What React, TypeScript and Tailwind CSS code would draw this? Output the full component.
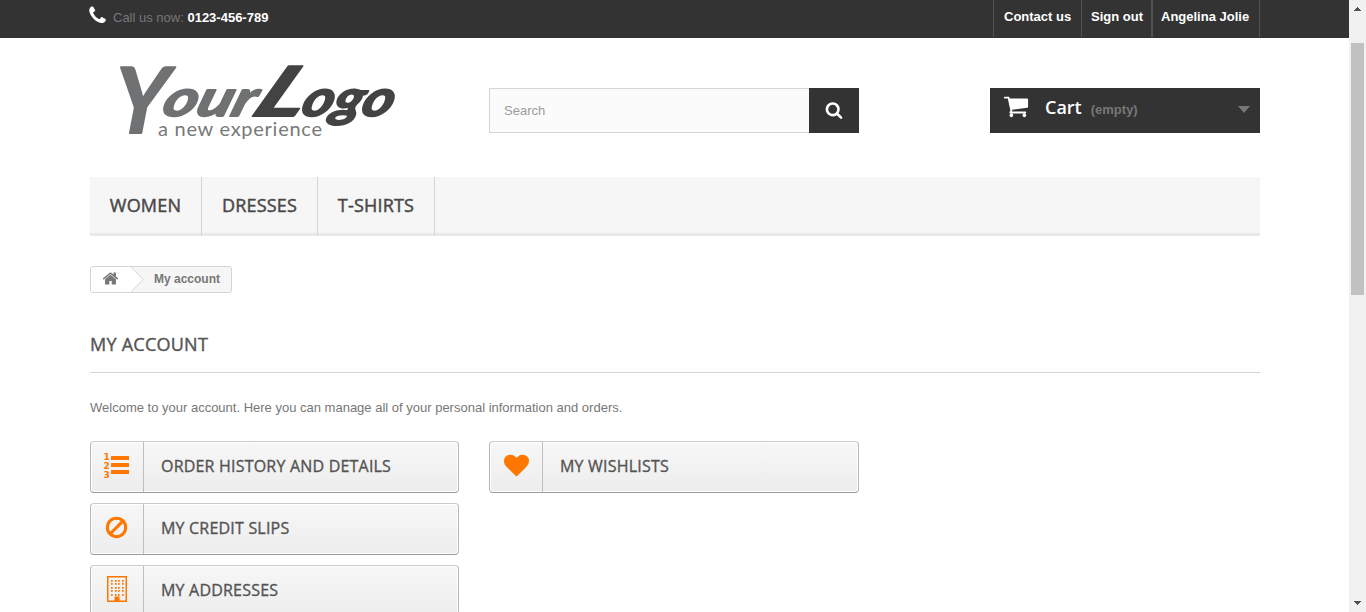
import type { ReactNode } from "react";

const PHONE =
  "M1600 1240q0 27-10 70.5t-21 68.5q-21 50-122 106-94 51-186 51-27 0-53-3.5t-57.5-12.5-47-14.5-55.5-20.5-49-18q-98-35-175-83-127-79-264-216t-216-264q-48-77-83-175-3-9-18-49t-20.5-55.5-14.5-47-12.5-57.5-3.5-53q0-92 51-186 56-101 106-122 25-11 68.5-21t70.5-10q14 0 21 3 18 6 53 76 11 19 30 54t35 63.5 31 53.5q3 4 17.5 25t21.5 35.5 7 28.5q0 20-28.5 50t-62 55-62 53-28.5 46q0 9 5 22.5t8.5 20.5 14 24 11.5 19q76 137 174 235t235 174q2 1 19 11.5t24 14 20.5 8.5 22.5 5q18 0 46-28.5t53-62 55-62 50-28.5q14 0 28.5 7t35.5 21.5 25 17.5q25 15 53.5 31t63.5 35 54 30q70 35 76 53 3 7 3 21z";
const SEARCH =
  "M1216 832q0-185-131.5-316.5t-316.5-131.5-316.5 131.5-131.5 316.5 131.5 316.5 316.5 131.5 316.5-131.5 131.5-316.5zm512 832q0 52-38 90t-90 38q-54 0-90-38l-343-342q-179 124-399 124-143 0-273.5-55.5t-225-150-150-225-55.5-273.5 55.5-273.5 150-225 225-150 273.5-55.5 273.5 55.5 225 150 150 225 55.5 273.5q0 220-124 399l343 343q37 37 37 90z";
const CART =
  "M704 1536q0 52-38 90t-90 38-90-38-38-90 38-90 90-38 90 38 38 90zm896 0q0 52-38 90t-90 38-90-38-38-90 38-90 90-38 90 38 38 90zm128-1088v512q0 24-16.5 42.5t-40.5 21.5l-1044 122q13 60 13 70 0 16-24 64h920q26 0 45 19t19 45-19 45-45 19h-1024q-26 0-45-19t-19-45q0-11 8-31.5t16-36 21.5-40 15.5-29.5l-177-823h-204q-26 0-45-19t-19-45 19-45 45-19h256q16 0 28.5 6.5t19.5 15.5 13 24.5 8 26 5.5 29.5 4.5 26h1201q26 0 45 19t19 45z";
const HOME =
  "M1472 992v480q0 26-19 45t-45 19h-384v-384h-256v384h-384q-26 0-45-19t-19-45v-480q0-1 .5-3t.5-3l575-474 575 474q1 2 1 6zm223-69l-62 74q-8 9-21 11h-3q-13 0-21-7l-692-577-692 577q-12 8-24 7-13-2-21-11l-62-74q-8-10-7-23.5t11-21.5l719-599q32-26 76-26t76 26l244 204v-195q0-14 9-23t23-9h192q14 0 23 9t9 23v408l219 182q10 8 11 21.5t-7 23.5z";
const HEART =
  "M896 1664q-26 0-44-18l-624-602q-10-8-27.5-26t-55.5-65.5-68-97.5-53.5-121-23.5-138q0-220 127-344t351-124q62 0 126.5 21.5t120 58 95.5 68.5 76 68q36-36 76-68t95.5-68.5 120-58 126.5-21.5q224 0 351 124t127 344q0 221-229 450l-623 600q-18 18-44 18z";
const BAN =
  "M1440 893q0-161-87-295l-754 753q137 89 297 89 111 0 211.5-43.5t173.5-116.5 116-174.5 43-212.5zm-999 299l755-754q-135-91-300-91-148 0-273 73t-198 199-73 274q0 162 89 299zm1223-299q0 157-61 300t-163.5 246-245 164-298.5 61-298.5-61-245-164-163.5-246-61-300 61-299.5 163.5-245.5 245-164 298.5-61 298.5 61 245 164 163.5 245.5 61 299.5z";

function Glyph({ d, className }: { d: string; className: string }) {
  return (
    <svg viewBox="0 0 1792 1792" className={`shrink-0 fill-current ${className}`} aria-hidden="true">
      <path d={d} />
    </svg>
  );
}

function ListIcon() {
  return (
    <svg width="26" height="26" viewBox="0 0 26 26" className="fill-current font-['DejaVu_Sans',sans-serif] text-[9px] font-bold" aria-hidden="true">
      <text x="-0.5" y="7">1</text>
      <text x="-0.5" y="16">2</text>
      <text x="-0.5" y="25">3</text>
      <rect x="7" y="3" width="18" height="4" rx="0.5" />
      <rect x="7" y="10" width="18" height="4" rx="0.5" />
      <rect x="7" y="17" width="18" height="4" rx="0.5" />
    </svg>
  );
}

function BuildingIcon() {
  const columns = [4, 8, 11, 15];
  const rows = [4, 7, 11, 14, 18];
  return (
    <svg width="20" height="26" viewBox="0 0 20 26" className="-mt-[1px] fill-current" aria-hidden="true">
      <rect x="0.75" y="0.75" width="18.5" height="24.5" fill="none" stroke="currentColor" strokeWidth="1.5" />
      {rows.map((y) =>
        columns.map((x) => <rect key={`${x}-${y}`} x={x} y={y} width="1.7" height="1.8" />),
      )}
      <rect x="7.5" y="20.5" width="5" height="5" />
    </svg>
  );
}

function Logo() {
  return (
    <svg width="350" height="110" viewBox="0 0 350 110" className="block overflow-visible" role="img" aria-label="YourLogo">
      <g className="font-['Lato',sans-serif] font-bold italic" strokeWidth="1.8" strokeLinejoin="round">
        <g fill="#6f7172" stroke="#6f7172">
          <text transform="translate(22 95) skewX(-4)" fontSize="91" textLength="54" lengthAdjust="spacingAndGlyphs">Y</text>
          <text transform="translate(70 78) skewX(-18)" fontSize="51" textLength="92" lengthAdjust="spacingAndGlyphs">our</text>
        </g>
        <g fill="#434344" stroke="#434344">
          <text transform="translate(159 78) skewX(-28)" fontSize="69" textLength="50" lengthAdjust="spacingAndGlyphs">L</text>
          <text transform="translate(209 78) skewX(-18)" fontSize="51" textLength="91" lengthAdjust="spacingAndGlyphs">ogo</text>
        </g>
      </g>
      <text x="68" y="98" fill="#77797a" fontSize="20" textLength="164" className="font-['Lato',sans-serif]">
        a new experience
      </text>
    </svg>
  );
}

function AccountLink({ icon, label }: { icon: ReactNode; label: string }) {
  return (
    <a
      href="#"
      className="flex h-[52px] overflow-hidden rounded border border-t-[#cacaca] border-r-[#b7b7b7] border-b-[#9a9a9a] border-l-[#b7b7b7] bg-linear-to-b from-[#f7f7f7] to-[#ededed] shadow-[inset_0_0_0_1px_#ffffff]"
    >
      <span className="flex w-[53px] shrink-0 items-center justify-center border-r border-[#bfbfbf] pr-[1px] pb-[3px] text-[#ff7700]">{icon}</span>
      <span className="pt-[13px] pl-[17px] font-['Open_Sans',sans-serif] text-[16px] leading-[23px] font-normal tracking-[0.2px] text-[#555454] [-webkit-text-stroke:0.35px_#555454]">
        {label}
      </span>
    </a>
  );
}

function TopBar() {
  const link = "h-[37px] border-l border-[#515151] pt-2 leading-[18px]";
  return (
    <header className="h-[38px] bg-[#333333] text-[13px]">
      <div className="ml-[90px] flex w-[1170px] justify-between">
        <div className="flex pt-[9px] leading-[18px] text-[#777777]">
          <Glyph d={PHONE} className="-mt-[4px] mr-[2px] -ml-[3px] h-[21px] w-[21px] text-white" />
          <span className="ml-[3px]">
            Call us now: <strong className="text-white">0123-456-789</strong>
          </span>
        </div>
        <nav className="flex font-bold text-white">
          <a href="#" className={`${link} w-[88px] pl-[10px]`}>Contact us</a>
          <a href="#" className={`${link} w-[70px] pl-[9px]`}>Sign out</a>
          <a href="#" className="h-[37px] w-[109px] border-r border-l-2 border-[#515151] pt-2 pl-[8px] leading-[18px]">
            Angelina Jolie
          </a>
        </nav>
      </div>
    </header>
  );
}

function Scrollbar() {
  return (
    <div className="flex w-[17px] shrink-0 flex-col items-center bg-[#f1f1f1]">
      <svg width="17" height="17" viewBox="0 0 17 17" className="mb-[26px]" fill="#505050" shapeRendering="crispEdges" aria-hidden="true">
        <path d="M8 7h1v1h1v1h1v1h1v1H5v-1h1V9h1V8h1z" />
      </svg>
      <div className="h-[252px] w-[13px] bg-[#c1c1c1]" />
      <svg width="17" height="17" viewBox="0 0 17 17" className="mt-auto" fill="#505050" shapeRendering="crispEdges" aria-hidden="true">
        <path d="M5 6h7v1h-1v1h-1v1H9v1H8V9H7V8H6V7H5z" />
      </svg>
    </div>
  );
}

export default function App() {
  return (
    <div className="flex h-[612px] overflow-hidden bg-white font-['Liberation_Sans',Arial,sans-serif] text-[13px] text-[#777777]">
      <div className="min-w-0 flex-1 overflow-hidden">
        <TopBar />
        <main className="ml-[90px] w-[1170px]">
          <div className="flex h-[139px]">
            <div className="w-[399px] shrink-0">
              <Logo />
            </div>
            <form className="mt-[50px] flex h-[45px] w-[370px]">
              <input
                placeholder="Search"
                className="w-[320px] border border-r-0 border-[#d6d4d4] bg-[#fbfbfb] px-[14px] placeholder:text-[#9c9b9b]"
              />
              <button type="button" className="flex w-[50px] items-center justify-center bg-[#333333] pb-[1px] text-white">
                <Glyph d={SEARCH} className="h-[18px] w-[18px]" />
              </button>
            </form>
            <a href="#" className="mt-[50px] ml-auto flex h-[45px] w-[270px] bg-[#333333] font-bold">
              <Glyph d={CART} className="mt-[5px] ml-[13px] h-[26px] w-[26px] text-white" />
              <span className="ml-[16px] pt-[8px] font-['Open_Sans',sans-serif] text-[18px] leading-[23px] font-semibold text-white">Cart</span>
              <span className="pt-[13px] pl-[9px] leading-[18px] text-[#777777]">(empty)</span>
              <svg width="12" height="7" viewBox="0 0 12 7" className="mt-[18px] mr-[10px] ml-auto" fill="#777777" aria-hidden="true">
                <path d="M0 0h12L6 7z" />
              </svg>
            </a>
          </div>

          <nav className="flex h-[59px] bg-[linear-gradient(#f6f6f6_56px,#e9e9e9_56px)] font-['Open_Sans',sans-serif] text-[18px] leading-[22px] font-normal tracking-[0.2px] text-[#484848] [-webkit-text-stroke:0.45px_#484848]">
            <a href="#" className="w-[112px] border-r border-[#d6d4d4] pt-[17px] text-center">WOMEN</a>
            <a href="#" className="w-[116px] border-r border-[#d6d4d4] pt-[17px] text-center">DRESSES</a>
            <a href="#" className="w-[117px] border-r border-[#d6d4d4] pt-[17px] text-center">T-SHIRTS</a>
          </nav>

          <div className="mt-[30px] flex h-[27px] w-[142px] overflow-hidden rounded-[3px] border border-[#d6d4d4] bg-[#f6f6f6] text-[12px] font-bold">
            <a href="#" className="flex w-[39px] items-center justify-center bg-white pb-[3px]">
              <Glyph d={HOME} className="h-[17px] w-[17px]" />
            </a>
            <svg width="14" height="25" viewBox="0 0 14 25" aria-hidden="true">
              <path d="M0 0h1l12 12.5L1 25H0z" fill="#fff" />
              <path d="M1 0l12 12.5L1 25" fill="none" stroke="#d6d4d4" />
            </svg>
            <span className="pl-[10px] leading-[24px]">My account</span>
          </div>

          <h1 className="mt-[40px] h-[40px] border-b border-[#d6d4d4] font-['Open_Sans',sans-serif] text-[18px] leading-[22px] font-normal tracking-[0.25px] text-[#555454] [-webkit-text-stroke:0.4px_#555454]">
            MY ACCOUNT
          </h1>
          <p className="mt-[26px] leading-[18px]">Welcome to your account. Here you can manage all of your personal information and orders.</p>

          <div className="mt-[24px] flex gap-[30px]">
            <div className="flex w-[369px] flex-col gap-[10px]">
              <AccountLink label="ORDER HISTORY AND DETAILS" icon={<ListIcon />} />
              <AccountLink label="MY CREDIT SLIPS" icon={<Glyph d={BAN} className="h-[25px] w-[25px]" />} />
              <AccountLink label="MY ADDRESSES" icon={<BuildingIcon />} />
            </div>
            <div className="w-[370px]">
              <AccountLink label="MY WISHLISTS" icon={<Glyph d={HEART} className="ml-[1px] h-[25px] w-[25px]" />} />
            </div>
          </div>
        </main>
      </div>
      <Scrollbar />
    </div>
  );
}
